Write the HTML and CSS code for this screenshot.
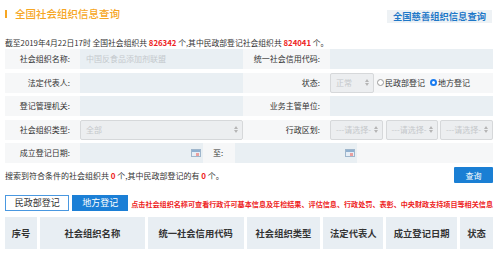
FILE: index.html
```html
<!DOCTYPE html>
<html lang="zh">
<head>
<meta charset="utf-8">
<link rel="stylesheet" href="styles.css">
</head>
<body>
<div class="page">
  <div class="header">
    <div class="title"><span class="bar"></span>全国社会组织信息查询</div>
    <a class="charity">全国慈善组织信息查询</a>
  </div>
  <div class="info">截至2019年4月22日17时 全国社会组织共 <b class="red">826342</b> 个,其中民政部登记社会组织共 <b class="red">824041</b> 个。</div>

  <div class="form">
    <div class="row">
      <div class="label">社会组织名称:</div>
      <div class="input placeholder">中国反食品添加剂联盟</div>
      <div class="label">统一社会信用代码:</div>
      <div class="input"></div>
    </div>
    <div class="row">
      <div class="label">法定代表人:</div>
      <div class="input"></div>
      <div class="label">状态:</div>
      <div class="status">
        <div class="select small"><span>正常</span><svg class="arr" width="4" height="7" viewBox="0 0 4 7"><path d="M0 3L2 0L4 3Z M0 4L2 7L4 4Z" fill="#b5b5b5"/></svg></div>
        <span class="radio"></span><span class="rtext">民政部登记</span>
        <span class="radio on"></span><span class="rtext">地方登记</span>
      </div>
    </div>
    <div class="row">
      <div class="label">登记管理机关:</div>
      <div class="input"></div>
      <div class="label">业务主管单位:</div>
      <div class="input"></div>
    </div>
    <div class="row">
      <div class="label">社会组织类型:</div>
      <div class="select"><span>全部</span><svg class="arr" width="4" height="7" viewBox="0 0 4 7"><path d="M0 3L2 0L4 3Z M0 4L2 7L4 4Z" fill="#b5b5b5"/></svg></div>
      <div class="label">行政区划:</div>
      <div class="regions">
        <div class="select"><span>---请选择-</span><svg class="arr" width="4" height="7" viewBox="0 0 4 7"><path d="M0 3L2 0L4 3Z M0 4L2 7L4 4Z" fill="#b5b5b5"/></svg></div>
        <div class="select"><span>---请选择-</span><svg class="arr" width="4" height="7" viewBox="0 0 4 7"><path d="M0 3L2 0L4 3Z M0 4L2 7L4 4Z" fill="#b5b5b5"/></svg></div>
        <div class="select"><span>---请选择-</span><svg class="arr" width="4" height="7" viewBox="0 0 4 7"><path d="M0 3L2 0L4 3Z M0 4L2 7L4 4Z" fill="#b5b5b5"/></svg></div>
      </div>
    </div>
    <div class="row daterow">
      <div class="label">成立登记日期:</div>
      <div class="input date"><svg width="10" height="8" viewBox="0 0 10 8"><rect x="0.5" y="0.5" width="9" height="7" fill="#e6eef6" stroke="#9fb6cc"/><rect x="1" y="1" width="8" height="2" fill="#8fb0d0"/><rect x="5" y="4" width="3" height="3" fill="#e9a0a0"/></svg></div>
      <div class="label to">至:</div>
      <div class="input date"><svg width="10" height="8" viewBox="0 0 10 8"><rect x="0.5" y="0.5" width="9" height="7" fill="#e6eef6" stroke="#9fb6cc"/><rect x="1" y="1" width="8" height="2" fill="#8fb0d0"/><rect x="5" y="4" width="3" height="3" fill="#e9a0a0"/></svg></div>
      <div class="label"></div>
    </div>
  </div>

  <div class="result">
    <div>搜索到符合条件的社会组织共 <b class="red">0</b> 个,其中民政部登记的有 <b class="red">0</b> 个。</div>
    <button class="query">查询</button>
  </div>

  <div class="tabs">
    <button class="tab">民政部登记</button>
    <button class="tab active">地方登记</button>
    <span class="note">点击社会组织名称可查看行政许可基本信息及年检结果、评估信息、行政处罚、表彰、中央财政支持项目等相关信息</span>
  </div>

  <div class="thead">
    <div class="th c1">序号</div>
    <div class="th c2">社会组织名称</div>
    <div class="th c3">统一社会信用代码</div>
    <div class="th c4">社会组织类型</div>
    <div class="th c5">法定代表人</div>
    <div class="th c6">成立登记日期</div>
    <div class="th c7">状态</div>
  </div>
</div>
</body>
</html>
```

FILE: styles.css
```css
* { box-sizing: border-box; }
html, body { margin: 0; padding: 0; background: #fff; }
body {
  width: 500px;
  height: 254px;
  overflow: hidden;
  font-family: "Noto Sans CJK SC", "Noto Sans", sans-serif;
  font-size: 8px;
  color: #333;
}
.page { padding: 0 7px 0 5px; }

.header {
  height: 36px;
  display: flex;
  align-items: flex-start;
  justify-content: space-between;
}
.title {
  margin-top: 7px;
  display: flex;
  align-items: center;
  font-size: 10.5px;
  line-height: 14px;
  color: #f6a623;
  font-weight: 500;
}
.bar {
  display: inline-block;
  width: 2px;
  height: 8px;
  background: #f6a623;
  margin-right: 8px;
}
.charity {
  margin-top: 10px;
  margin-right: 1px;
  background: #eef2f5;
  color: #1f78c8;
  font-weight: bold;
  font-size: 9.3px;
  line-height: 13px;
  height: 13px;
  padding: 0 6px;
}

.info {
  line-height: 13px;
  height: 13px;
  font-size: 7.8px;
  white-space: nowrap;
}
.red { color: #ee1d23; font-weight: bold; }

.form { display: flex; flex-direction: column; gap: 3.5px; }
.row {
  display: grid;
  grid-template-columns: 75px 163px 87px 163px;
  height: 20px;
}
.daterow {
  grid-template-columns: 75px 123px 32px 122px 136px;
}
.label {
  background: #f6f7f8;
  text-align: right;
  padding-right: 10px;
  line-height: 20px;
  white-space: nowrap;
}
.label.to { padding-right: 0; text-align: left; padding-left: 10px; }
.input {
  background: #e9eff3;
  line-height: 20px;
  padding-left: 6px;
}
.placeholder { color: #c4c9cd; }
.date {
  display: flex;
  justify-content: flex-end;
  align-items: center;
  padding-right: 2px;
}

.select {
  background: #eceef0;
  border: 1px solid #d6d8da;
  border-radius: 2px;
  color: #c5c8cb;
  display: flex;
  align-items: center;
  justify-content: space-between;
  padding: 0 4px 0 5px;
  height: 20px;
  white-space: nowrap;
  overflow: hidden;
}
.status {
  background: #f6f7f8;
  display: flex;
  align-items: center;
}
.select.small { width: 44px; flex: none; }
.radio {
  width: 7px;
  height: 7px;
  border-radius: 50%;
  border: 1px solid #9a9a9a;
  background: #fff;
  margin-left: 3px;
  margin-right: 1px;
  flex: none;
}
.radio.on {
  border: 2.3px solid #1a7cf0;
  background: #fff;
  margin-left: 5px;
}
.rtext { white-space: nowrap; }

.regions {
  display: grid;
  grid-template-columns: 53px 52px 53px;
  gap: 2.5px;
  background: #f6f7f8;
}

.result {
  display: flex;
  justify-content: space-between;
  align-items: center;
  height: 22px;
  margin-top: 1px;
  white-space: nowrap;
}
.query {
  width: 39px;
  height: 16px;
  border: none;
  background: #1a7fd4;
  color: #fff;
  font-family: inherit;
  font-size: 8px;
  padding: 0;
  border-radius: 1px;
}

.tabs {
  margin-top: 9px;
  display: flex;
  align-items: center;
  height: 16px;
  white-space: nowrap;
}
.tab {
  height: 16px;
  font-family: inherit;
  font-size: 9px;
  padding: 0;
  border: 1px solid #4a98e0;
  background: #fff;
  color: #333;
  width: 67px;
  line-height: 14px;
}
.tab.active {
  background: #1b7fd6;
  color: #fff;
  border-color: #1b7fd6;
  width: 58px;
  margin-left: 3px;
}
.note {
  margin-left: 3px;
  color: #ee1d23;
  font-size: 7.1px;
  font-weight: bold;
  padding-top: 2px;
}

.thead {
  margin-top: 6px;
  display: flex;
  gap: 3px;
  height: 32px;
}
.th {
  background: #e8eef3;
  font-weight: bold;
  font-size: 9.3px;
  display: flex;
  align-items: center;
  justify-content: center;
  white-space: nowrap;
  color: #333;
}
.c1 { width: 32px; }
.c2 { width: 105px; }
.c3 { width: 96px; }
.c4 { width: 74px; }
.c5 { width: 60px; }
.c6 { width: 71px; }
.c7 { width: 33px; }
```
